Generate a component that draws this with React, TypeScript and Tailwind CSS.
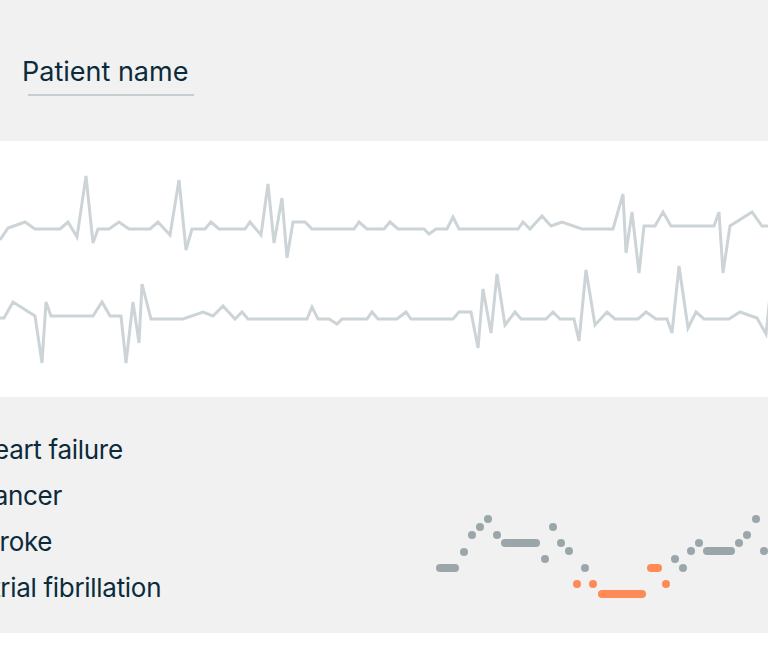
const ECG_TOP: [number, number][] = [
  [0, 240], [8, 228], [25, 222], [35, 229], [60, 229], [68, 222], [77, 237], [86, 176], [93, 243], [98, 229],
  [109, 229], [119, 222], [129, 229], [150, 229], [158, 222], [170, 235], [179, 180], [186, 250], [192, 229],
  [205, 229], [211, 222], [219, 229], [245, 229], [250, 222], [261, 235], [268, 184], [274, 243], [282, 198],
  [287, 258], [293, 222], [305, 222], [312, 229], [354, 229], [359, 222], [367, 229], [384, 229], [390, 222],
  [398, 229], [424, 229], [429, 234], [436, 229], [447, 229], [453, 217], [459, 229], [518, 229], [523, 222],
  [530, 229], [542, 216], [551, 226], [562, 222], [582, 229], [613, 229], [623, 194], [626, 253], [632, 212],
  [639, 273], [644, 226], [655, 226], [663, 212], [671, 226], [714, 226], [719, 212], [723, 273], [730, 226],
  [752, 212], [762, 226], [768, 226],
]

const ECG_BOTTOM: [number, number][] = [
  [0, 318], [4, 318], [13, 302], [35, 316], [42, 363], [46, 302], [51, 316], [93, 316], [102, 302], [110, 316],
  [121, 316], [126, 363], [133, 302], [139, 343], [142, 284], [151, 319], [183, 319], [203, 312], [213, 316],
  [223, 306], [235, 319], [242, 312], [248, 319], [307, 319], [312, 307], [318, 319], [329, 319], [337, 324],
  [342, 319], [367, 319], [372, 312], [378, 319], [397, 319], [406, 312], [411, 319], [453, 319], [459, 312],
  [471, 312], [478, 348], [483, 289], [491, 333], [497, 274], [505, 325], [515, 312], [521, 319], [546, 319],
  [553, 312], [560, 319], [574, 319], [579, 341], [586, 270], [595, 325], [607, 312], [615, 319], [638, 319],
  [646, 312], [656, 319], [667, 319], [672, 333], [679, 266], [688, 328], [696, 312], [704, 319], [729, 319],
  [740, 312], [757, 318], [766, 334], [770, 296],
]

const CONDITIONS = ['Heart failure', 'Cancer', 'Stroke', 'Atrial fibrillation']

type Mark = { x1: number; x2?: number; y: number; hot?: boolean }

// x2 given => pill, otherwise a single dot
const MARKS: Mark[] = [
  { x1: 436, x2: 459, y: 568 },
  { x1: 464, y: 552 },
  { x1: 472, y: 535 },
  { x1: 480, y: 527 },
  { x1: 488, y: 519 },
  { x1: 497, y: 535 },
  { x1: 501, x2: 540, y: 543 },
  { x1: 545, y: 559 },
  { x1: 553, y: 527 },
  { x1: 561, y: 543 },
  { x1: 569, y: 551 },
  { x1: 585, y: 568 },
  { x1: 577, y: 584, hot: true },
  { x1: 593, y: 584, hot: true },
  { x1: 598, x2: 646, y: 594, hot: true },
  { x1: 647, x2: 662, y: 568, hot: true },
  { x1: 666, y: 584, hot: true },
  { x1: 675, y: 559 },
  { x1: 683, y: 568 },
  { x1: 691, y: 551 },
  { x1: 699, y: 543 },
  { x1: 703, x2: 735, y: 551 },
  { x1: 739, y: 543 },
  { x1: 747, y: 535 },
  { x1: 756, y: 519 },
  { x1: 764, y: 551 },
  { x1: 772, y: 560 },
]

const toPoints = (pts: [number, number][]) => pts.map(([x, y]) => `${x},${y}`).join(' ')

function EcgStrip() {
  return (
    <svg className="block h-[256px] w-[768px]" viewBox="0 141 768 256" fill="none">
      <polyline points={toPoints(ECG_TOP)} stroke="#cdd4d7" strokeWidth={3} strokeLinejoin="miter" />
      <polyline points={toPoints(ECG_BOTTOM)} stroke="#cdd4d7" strokeWidth={3} strokeLinejoin="miter" />
    </svg>
  )
}

function RiskChart() {
  return (
    <svg className="block h-[236px] w-[348px] shrink-0" viewBox="420 397 348 236" fill="none">
      {MARKS.map((m, i) => {
        const color = m.hot ? '#ff8a56' : '#9ba6ab'
        if (m.x2 === undefined) return <circle key={i} cx={m.x1} cy={m.y} r={4} fill={color} />
        return (
          <line
            key={i}
            x1={m.x1 + 4}
            x2={m.x2 - 4}
            y1={m.y}
            y2={m.y}
            stroke={color}
            strokeWidth={8}
            strokeLinecap="round"
          />
        )
      })}
    </svg>
  )
}

export default function App() {
  return (
    <div className="h-[651px] w-[768px] overflow-hidden bg-white font-['Inter',sans-serif] text-[#0c2b3a]">
      <div className="h-[141px] bg-[#f1f1f1] pl-[22px] pt-[55px]">
        <div className="text-[27px] leading-[34px] tracking-[0px]">Patient name</div>
        <div className="ml-[6px] mt-[5px] h-[2px] w-[166px] bg-[#c7cdd0]" />
      </div>

      <EcgStrip />

      <div className="flex h-[236px] bg-[#f1f1f1]">
        <div className="ml-[-25px] flex w-[445px] flex-col pt-[30px]">
          {CONDITIONS.map((c) => (
            <div key={c} className="whitespace-nowrap text-[26px] leading-[46px] tracking-[-0.3px]">
              {c}
            </div>
          ))}
        </div>
        <RiskChart />
      </div>
    </div>
  )
}
